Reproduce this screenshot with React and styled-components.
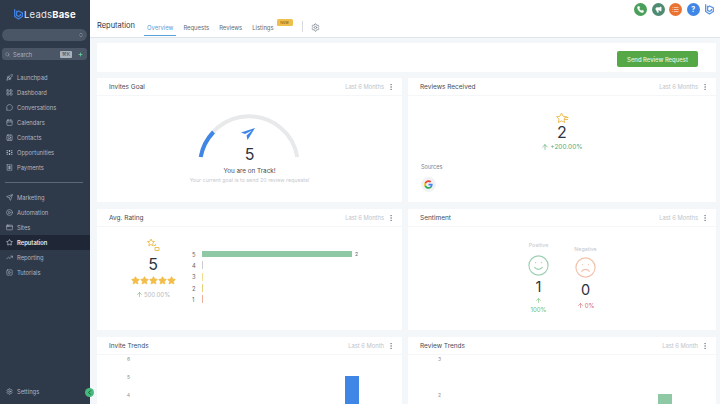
import React from "react";
import styled, { createGlobalStyle } from "styled-components";
import {
  Rocket, LayoutGrid, MessageCircle, Calendar, ContactRound, Receipt, Send, CirclePlay,
  AppWindow, Star, TrendingUp, SquarePlay, Settings, Phone, Megaphone, List, ChevronLeft, Search,
  MoreVertical, ArrowUp, Smile, Frown, ChevronsUpDown, Plus,
} from "lucide-react";

const GlobalStyle = createGlobalStyle`
  html, body { margin: 0; padding: 0; height: 100%; }
  body { font-family: Inter, "Liberation Sans", sans-serif; overflow: hidden; background: #f4f7f9; }
  * { box-sizing: border-box; }
`;

const Page = styled.div`
  display: flex;
  width: 720px;
  height: 404px;
  overflow: hidden;
`;

const Sidebar = styled.aside`
  position: relative;
  flex: 0 0 90px;
  display: flex;
  flex-direction: column;
  background: #2e3949;
  color: #b6bdc8;
`;

const Brand = styled.div`
  display: flex;
  align-items: center;
  height: 28px;
  padding: 1px 0 0 13px;
  font-size: 9.5px;
  letter-spacing: 0.2px;
  color: #e4e8ee;
  b { font-weight: 700; color: #fff; }
`;

const OrgSelect = styled.div`
  display: flex;
  align-items: center;
  justify-content: flex-end;
  height: 12px;
  margin: 1px 3px 0 2px;
  padding-right: 3px;
  border-radius: 6px;
  background: #4a5565;
`;

const SearchRow = styled.div`
  display: flex;
  align-items: center;
  gap: 3px;
  height: 12px;
  margin: 7px 3px 0 2px;
  padding: 0 4px 0 3px;
  border-radius: 3px;
  background: #4a5565;
  font-size: 5.8px;
  color: #a8b0bc;
`;

const Keys = styled.span`
  margin-left: auto;
  margin-right: 3px;
  padding: 0 2px;
  height: 7px;
  line-height: 7px;
  font-size: 5px;
  border-radius: 1px;
  background: #aab2bd;
  color: #3d4757;
`;

const NavList = styled.nav`
  display: flex;
  flex-direction: column;
  margin-top: ${(p) => p.$top}px;
`;

const NavItem = styled.div`
  display: flex;
  align-items: center;
  gap: 4px;
  height: 15px;
  padding-left: 6px;
  font-size: 5.8px;
  font-weight: ${(p) => (p.$active ? 600 : 400)};
  color: ${(p) => (p.$active ? "#e8ebf0" : "#aeb6c2")};
  background: ${(p) => (p.$active ? "#1f2737" : "transparent")};
`;

const NavDivider = styled.hr`
  width: 78px;
  height: 1px;
  margin: 7px 0 0 5px;
  border: 0;
  background: #5c6778;
`;

const SettingsItem = styled(NavItem)`
  margin-top: auto;
  margin-bottom: 5px;
`;

const CollapseBtn = styled.div`
  position: absolute;
  right: -4px;
  bottom: 7px;
  width: 9px;
  height: 9px;
  display: flex;
  align-items: center;
  justify-content: center;
  border-radius: 50%;
  background: #47b97c;
  color: #143;
`;

const Main = styled.main`
  flex: 1;
  display: flex;
  flex-direction: column;
  min-width: 0;
`;

const TopBar = styled.header`
  position: relative;
  display: flex;
  align-items: flex-end;
  flex: 0 0 38px;
  padding: 0 0 1px 7px;
  background: #fff;
  border-bottom: 1px solid #dfe4ea;
`;

const PageTitle = styled.div`
  margin-bottom: 5px;
  margin-right: 9px;
  font-size: 7.5px;
  line-height: 11px;
  color: #2f3744;
`;

const Tab = styled.div`
  position: relative;
  height: 17px;
  padding: 4px 3px 0;
  margin-right: 4px;
  font-size: 5.9px;
  line-height: 9px;
  color: ${(p) => (p.$active ? "#5aa0d8" : "#636c78")};
  border-bottom: ${(p) => (p.$active ? "1px solid #5aa0d8" : "0")};
`;

const NewBadge = styled.span`
  position: absolute;
  top: 0;
  right: -16px;
  width: 16px;
  height: 7px;
  border-radius: 1.5px;
  background: #eebf4d;
  color: #7c5a10;
  font-size: 4px;
  line-height: 7px;
  text-align: center;
`;

const TabSep = styled.div`
  width: 1px;
  height: 11px;
  margin: 0 8px 4px 21px;
  background: #d8dce2;
`;

const GearWrap = styled.div`
  display: flex;
  margin-bottom: 4px;
  color: #7a828d;
`;

const TopActions = styled.div`
  position: absolute;
  top: 2.5px;
  right: 5px;
  display: flex;
  align-items: center;
  gap: 4.4px;
`;

const RoundAction = styled.div`
  width: 13px;
  height: 13px;
  display: flex;
  align-items: center;
  justify-content: center;
  border-radius: 50%;
  color: #fff;
  background: ${(p) => p.$bg};
  font-size: 7px;
  font-weight: 700;
`;

const ActionBar = styled.div`
  display: flex;
  justify-content: flex-end;
  align-items: flex-end;
  flex: 0 0 29px;
  margin: 5px 4px 0 7px;
  padding: 0 18px 5px 0;
  background: #fff;
`;

const GreenButton = styled.button`
  width: 81px;
  height: 16px;
  border: 0;
  border-radius: 2px;
  background: #55a845;
  color: #e6f3e2;
  font: 500 5.9px Inter, sans-serif;
`;

const CardGrid = styled.div`
  display: grid;
  grid-template-columns: 305px 308px;
  grid-template-rows: 124px 121px 80px;
  column-gap: 6px;
  row-gap: 7px;
  margin: 6px 0 0 7px;
`;

const Card = styled.section`
  display: flex;
  flex-direction: column;
  background: #fff;
  overflow: hidden;
`;

const CardHead = styled.div`
  display: flex;
  align-items: center;
  flex: 0 0 18px;
  padding: 0 7px 0 12px;
  border-bottom: 1px solid #f4f6f8;
`;

const CardTitle = styled.h3`
  margin: 0;
  font-size: 6.5px;
  font-weight: 400;
  color: #454c57;
`;

const Range = styled.span`
  margin-left: auto;
  margin-right: 3px;
  font-size: 5.8px;
  color: #c0c4ca;
`;

const MoreIcon = styled(MoreVertical)`
  color: #777f8a;
`;

const Center = styled.div`
  display: flex;
  flex-direction: column;
  align-items: center;
`;

const GaugeBox = styled(Center)`
  padding-top: 18px;
`;

const GaugeSvgWrap = styled.div`
  position: relative;
  width: 108px;
  height: 44px;
`;

const PlaneIcon = styled.div`
  position: absolute;
  left: 45px;
  top: 14px;
  display: flex;
`;

const BigNum = styled.div`
  margin-top: ${(p) => p.$top || 0}px;
  font-size: ${(p) => p.$size || 16}px;
  line-height: 16px;
  color: #2c3340;
`;

const GaugeNum = styled(BigNum)`
  line-height: 18px;
  margin-top: -13px;
`;

const TrackText = styled.div`
  margin-top: 3px;
  font-size: 6.3px;
  line-height: 10px;
  color: #444b56;
`;

const GoalText = styled.div`
  font-size: 5.3px;
  line-height: 9px;
  color: #c6c9ce;
`;

const ReceivedTop = styled(Center)`
  padding-top: 16px;
`;

const Delta = styled.div`
  display: flex;
  align-items: center;
  justify-content: center;
  gap: 1px;
  margin-top: ${(p) => p.$top || 0}px;
  font-size: ${(p) => p.$size || 6.5}px;
  line-height: 9px;
  color: ${(p) => p.$color};
`;

const SourcesLabel = styled.div`
  margin: 11px 0 0 13px;
  font-size: 5.5px;
  line-height: 8px;
  color: #7d838c;
`;

const GoogleBadge = styled.div`
  display: flex;
  align-items: center;
  justify-content: center;
  width: 15px;
  height: 15px;
  margin: 6px 0 0 13px;
  border-radius: 50%;
  background: #f1f2f3;
`;

const RatingBody = styled.div`
  display: flex;
  align-items: flex-start;
  padding-left: 18px;
`;

const RatingSummary = styled(Center)`
  width: 76px;
  padding-top: 11px;
`;

const StarRow = styled.div`
  display: flex;
  margin-top: 3.5px;
`;

const Bars = styled.div`
  display: flex;
  flex-direction: column;
  gap: 1px;
  margin: 22px 0 0 1px;
`;

const BarRow = styled.div`
  display: flex;
  align-items: center;
  height: 10.3px;
  font-size: 5.8px;
  color: #5e6570;
`;

const BarNum = styled.span`
  width: 10px;
`;

const Bar = styled.div`
  height: ${(p) => p.$h}px;
  width: ${(p) => p.$w}px;
  background: ${(p) => p.$color};
`;

const BarCount = styled.span`
  margin-left: 3px;
  font-size: 5px;
`;

const SentimentBody = styled.div`
  display: flex;
  justify-content: center;
  gap: 15px;
`;

const SentimentCol = styled(Center)`
  width: 32px;
  padding-top: ${(p) => p.$top}px;
`;

const SentimentLabel = styled.div`
  margin-bottom: ${(p) => p.$gap}px;
  font-size: 5.3px;
  line-height: 8px;
  color: #c4c7cc;
`;

const UpArrow = styled(ArrowUp)`
  margin-top: 1.5px;
  color: #6cc06f;
`;

const ChartBody = styled.div`
  display: grid;
  grid-template-columns: ${(p) => p.$axis}px 1fr;
  flex: 1;
`;

const Axis = styled.div`
  display: flex;
  flex-direction: column;
  font-size: 5px;
  color: #8b9098;
  text-align: right;
  span { height: ${(p) => p.$step}px; line-height: 8px; }
`;

const Plot = styled.div`
  display: flex;
  justify-content: flex-end;
  padding-right: ${(p) => p.$right}px;
`;

const ChartBar = styled.div`
  width: 14px;
  height: 60px;
  margin-top: ${(p) => p.$top}px;
  background: ${(p) => p.$color};
`;

const GoogleG = () => (
  <svg width="9" height="9" viewBox="0 0 24 24">
    <path fill="#4285F4" d="M23 12.300c0-.8-.1-1.600-.2-2.300H12v4.400h6.200c-.3 1.400-1.100 2.600-2.300 3.400v2.800h3.700c2.200-2 3.400-5 3.400-8.300z" />
    <path fill="#34A853" d="M12 23.500c3.100 0 5.700-1 7.600-2.800l-3.700-2.900c-1 .7-2.300 1.100-3.900 1.100-3 0-5.500-2-6.400-4.700H1.800v2.900c1.900 3.800 5.800 6.400 10.200 6.400z" />
    <path fill="#FBBC05" d="M5.600 14.200c-.5-1.400-.5-3 0-4.400V6.900H1.800c-1.600 3.200-1.600 7 0 10.200l3.800-2.900z" />
    <path fill="#EA4335" d="M12 5c1.700 0 3.200.6 4.400 1.700l3.300-3.300C17.700 1.500 15.100.5 12 .5 7.600.5 3.700 3.100 1.800 6.900l3.800 2.900C6.500 7 9 5 12 5z" />
  </svg>
);

const LogoMark = ({ size = 11, color = "#3f7fe0" }) => (
  <svg width={size} height={size * 1.15} viewBox="0 0 20 23" fill="none" stroke={color} strokeWidth="2.400" strokeLinejoin="round">
    <path d="M3 2.500v13l7 4.500 7-4.500V9l-7-3.500-3 1.800" />
    <path d="M6.500 5v8.500l3.500 2 3.500-2v-2.500" />
  </svg>
);

const OpportunitiesIcon = () => (
  <svg width="7" height="7" viewBox="0 0 14 14" fill="none" stroke="currentColor" strokeWidth="1.800">
    <path d="M1 3.500h3M1 7h3M1 10.500h3M10 3.500h3M10 7h3M10 10.500h3" />
    <path d="M7 2v4M7 8v4" strokeWidth="2.600" />
  </svg>
);

const ReceivedStar = () => (
  <svg width="13" height="12" viewBox="0 0 26 24" fill="none" stroke="#eec05a" strokeWidth="2" strokeLinejoin="round">
    <path d="M11 2l3 6.500 7 .9-5 4.800 1.300 7-6.300-3.500-6.300 3.500L6 14.200 1 9.400l7-.9z" />
    <path d="M17 11h8M16 15h8" />
  </svg>
);

const RatingStars = () => (
  <svg width="13" height="13" viewBox="0 0 26 26" fill="none" stroke="#eec05a" strokeWidth="2" strokeLinejoin="round">
    <path d="M8 2l2 4.500 5 .6-3.600 3.400 1 5-4.400-2.500-4.400 2.500 1-5L1 7.100l5-.6z" />
    <path d="M14 15h3v-3M16 19h8v6h-8z" />
  </svg>
);

const Gauge = () => (
  <GaugeSvgWrap>
    <svg width="108" height="44" viewBox="0 0 108 44" fill="none">
      <path d="M4.700 43 A49 49 0 0 1 101.300 43" stroke="#e8e9ea" strokeWidth="4" />
      <path d="M4.700 43 A49 49 0 0 1 17.500 18" stroke="#3f86e6" strokeWidth="4" />
    </svg>
    <PlaneIcon>
      <svg width="14" height="12" viewBox="0 0 14 12">
        <path fill="#3f86e6" d="M0 4.500 14 0 6.500 12 5.500 7.500 11 2.500 4 6z" />
      </svg>
    </PlaneIcon>
  </GaugeSvgWrap>
);

const topNav = [
  ["Launchpad", Rocket],
  ["Dashboard", LayoutGrid],
  ["Conversations", MessageCircle],
  ["Calendars", Calendar],
  ["Contacts", ContactRound],
  ["Opportunities", OpportunitiesIcon],
  ["Payments", Receipt],
];

const bottomNav = [
  ["Marketing", Send],
  ["Automation", CirclePlay],
  ["Sites", AppWindow],
  ["Reputation", Star, true],
  ["Reporting", TrendingUp],
  ["Tutorials", SquarePlay],
];

const ratingBars = [
  [5, 150, 6, "#8fc8a4", "2"],
  [4, 1, 8, "#c9ccd2"],
  [3, 1, 8, "#f3dc93"],
  [2, 1, 8, "#e6d27a"],
  [1, 1, 8, "#eeb09a"],
];

const CardHeader = ({ title, range = "Last 6 Months" }) => (
  <CardHead>
    <CardTitle>{title}</CardTitle>
    <Range>{range}</Range>
    <MoreIcon size={8} />
  </CardHead>
);

export default function App() {
  return (
    <Page>
      <GlobalStyle />
      <Sidebar>
        <Brand>
          <LogoMark />
          <span>Leads<b>Base</b></span>
        </Brand>
        <OrgSelect>
          <ChevronsUpDown size={6} color="#a6aeb9" />
        </OrgSelect>
        <SearchRow>
          <Search size={5} />
          Search
          <Keys>⌘K</Keys>
          <Plus size={5} color="#5fd0a0" strokeWidth={4} />
        </SearchRow>
        <NavList $top={10}>
          {topNav.map(([label, Icon]) => (
            <NavItem key={label}>
              <Icon size={7} />
              {label}
            </NavItem>
          ))}
        </NavList>
        <NavDivider />
        <NavList $top={7}>
          {bottomNav.map(([label, Icon, active]) => (
            <NavItem key={label} $active={active}>
              <Icon size={7} />
              {label}
            </NavItem>
          ))}
        </NavList>
        <SettingsItem>
          <Settings size={7} />
          Settings
        </SettingsItem>
        <CollapseBtn>
          <ChevronLeft size={7} strokeWidth={3} />
        </CollapseBtn>
      </Sidebar>
      <Main>
        <TopBar>
          <PageTitle>Reputation</PageTitle>
          <Tab $active>Overview</Tab>
          <Tab>Requests</Tab>
          <Tab>Reviews</Tab>
          <Tab>Listings<NewBadge>New</NewBadge></Tab>
          <TabSep />
          <GearWrap><Settings size={9} /></GearWrap>
          <TopActions>
            <RoundAction $bg="#4aa05a"><Phone size={7} fill="#fff" /></RoundAction>
            <RoundAction $bg="#4f8b73"><Megaphone size={7} fill="#fff" /></RoundAction>
            <RoundAction $bg="#ea7331"><List size={7} /></RoundAction>
            <RoundAction $bg="#3f86e6">?</RoundAction>
            <LogoMark size={11} color="#5c96e6" />
          </TopActions>
        </TopBar>
        <ActionBar>
          <GreenButton>Send Review Request</GreenButton>
        </ActionBar>
        <CardGrid>
          <Card>
            <CardHeader title="Invites Goal" />
            <GaugeBox>
              <Gauge />
              <GaugeNum>5</GaugeNum>
              <TrackText>You are on Track!</TrackText>
              <GoalText>Your current goal is to send 20 review requests!</GoalText>
            </GaugeBox>
          </Card>
          <Card>
            <CardHeader title="Reviews Received" />
            <ReceivedTop>
              <ReceivedStar />
              <BigNum>2</BigNum>
              <Delta $top={2.5} $color="#5aa977"><ArrowUp size={8} />+200.00%</Delta>
            </ReceivedTop>
            <SourcesLabel>Sources</SourcesLabel>
            <GoogleBadge><GoogleG /></GoogleBadge>
          </Card>
          <Card>
            <CardHeader title="Avg. Rating" />
            <RatingBody>
              <RatingSummary>
                <RatingStars />
                <BigNum $top={5}>5</BigNum>
                <StarRow>
                  {[0, 1, 2, 3, 4].map((i) => (
                    <Star key={i} size={9} color="#f3bd4a" fill="#f3bd4a" />
                  ))}
                </StarRow>
                <Delta $top={5} $size={6} $color="#b4b8bd">
                  <ArrowUp size={7} color="#5bb56a" />500.00%
                </Delta>
              </RatingSummary>
              <Bars>
                {ratingBars.map(([n, w, h, color, count]) => (
                  <BarRow key={n}>
                    <BarNum>{n}</BarNum>
                    <Bar $w={w} $h={h} $color={color} />
                    {count && <BarCount>{count}</BarCount>}
                  </BarRow>
                ))}
              </Bars>
            </RatingBody>
          </Card>
          <Card>
            <CardHeader title="Sentiment" />
            <SentimentBody>
              <SentimentCol $top={14}>
                <SentimentLabel $gap={4.5}>Positive</SentimentLabel>
                <Smile size={23} color="#9fd0b2" strokeWidth={1.200} />
                <BigNum $top={2.5} $size={14.5}>1</BigNum>
                <UpArrow size={7} />
                <Delta $top={1} $size={6} $color="#6cc06f">100%</Delta>
              </SentimentCol>
              <SentimentCol $top={18}>
                <SentimentLabel $gap={2.5}>Negative</SentimentLabel>
                <Frown size={23} color="#f3c2ab" strokeWidth={1.200} />
                <BigNum $top={3.5} $size={14.5}>0</BigNum>
                <Delta $top={2.5} $size={6} $color="#d9646f"><ArrowUp size={7} />0%</Delta>
              </SentimentCol>
            </SentimentBody>
          </Card>
          <Card>
            <CardHeader title="Invite Trends" range="Last 6 Month" />
            <ChartBody $axis={33}>
              <Axis $step={18}>
                <span>6</span>
                <span>5</span>
                <span>4</span>
              </Axis>
              <Plot $right={43}>
                <ChartBar $top={21} $color="#3f86e6" />
              </Plot>
            </ChartBody>
          </Card>
          <Card>
            <CardHeader title="Review Trends" range="Last 6 Month" />
            <ChartBody $axis={33}>
              <Axis $step={36}>
                <span>3</span>
                <span>2</span>
              </Axis>
              <Plot $right={44}>
                <ChartBar $top={39} $color="#8fc8a4" />
              </Plot>
            </ChartBody>
          </Card>
        </CardGrid>
      </Main>
    </Page>
  );
}
